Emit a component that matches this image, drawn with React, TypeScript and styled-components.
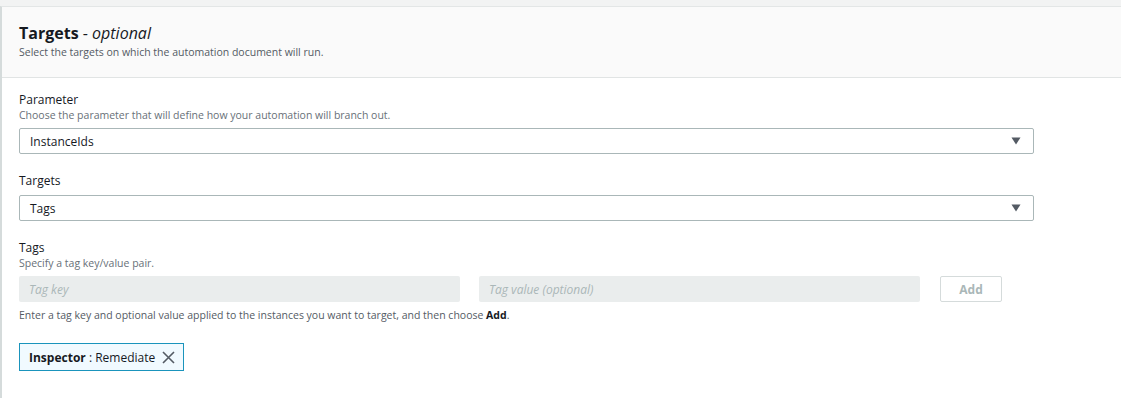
import React from 'react';
import styled, { createGlobalStyle } from 'styled-components';

const GlobalStyle = createGlobalStyle`
	html, body {
		margin: 0;
		padding: 0;
		background: #ffffff;
	}
	body {
		font-family: 'Open Sans', 'Noto Sans', Arial, sans-serif;
		color: #16191f;
	}
`;

type FieldProps = {
	label: string;
	description?: string;
	children: React.ReactNode;
};

function Field({ label, description, children }: FieldProps) {
	return (
		<View.Field>
			<Text.Label>{label}</Text.Label>
			{description && <Text.Description>{description}</Text.Description>}
			<View.Control>{children}</View.Control>
		</View.Field>
	);
}

function Select({ value }: { value: string }) {
	return (
		<View.Select>
			<Text.Value>{value}</Text.Value>
			<svg width="10" height="8" viewBox="0 0 10 8">
				<path d="M0.5 0.5 L9.5 0.5 L5 7.5 Z" fill="#545b64" />
			</svg>
		</View.Select>
	);
}

function App() {
	return (
		<>
			<GlobalStyle />
			<View.Page>
				<View.Panel>
					<View.Header>
						<Text.Title>
							Targets <span>- </span>
							<em>optional</em>
						</Text.Title>
						<Text.Subtitle>
							Select the targets on which the automation document will run.
						</Text.Subtitle>
					</View.Header>
					<View.Body>
						<Field
							label="Parameter"
							description="Choose the parameter that will define how your automation will branch out."
						>
							<Select value="InstanceIds" />
						</Field>
						<Field label="Targets">
							<Select value="Tags" />
						</Field>
						<Field label="Tags" description="Specify a tag key/value pair.">
							<View.TagRow>
								<View.Input>Tag key</View.Input>
								<View.Input>Tag value (optional)</View.Input>
								<View.Button>Add</View.Button>
							</View.TagRow>
							<Text.Hint>
								Enter a tag key and optional value applied to the instances you
								want to target, and then choose <b>Add</b>.
							</Text.Hint>
						</Field>
						<View.Token>
							<span>
								<b>Inspector</b> : Remediate
							</span>
							<svg width="13" height="13" viewBox="0 0 13 13">
								<path
									d="M1 1 L12 12 M12 1 L1 12"
									stroke="#545b64"
									strokeWidth="1.6"
								/>
							</svg>
						</View.Token>
					</View.Body>
				</View.Panel>
			</View.Page>
		</>
	);
}

export default App;

const View = {
	Page: styled.div`
		width: 1121px;
		height: 398px;
		background: #f2f3f3;
		padding-top: 6px;
		box-sizing: border-box;
		overflow: hidden;
	`,
	Panel: styled.div`
		background: #ffffff;
		border-top: 1px solid #e3e6e6;
		border-left: 2px solid #d5dbdb;
		height: 100%;
		box-sizing: border-box;
	`,
	Header: styled.div`
		background: #fafafa;
		border-bottom: 1px solid #e1e4e4;
		padding: 16px 17px 0;
		height: 71px;
		box-sizing: border-box;
	`,
	Body: styled.div`
		padding: 14px 17px 0;
		display: flex;
		flex-direction: column;
	`,
	Field: styled.div`
		display: flex;
		flex-direction: column;
		margin-bottom: 19px;
	`,
	Control: styled.div`
		margin-top: 6px;
	`,
	Select: styled.div`
		width: 1015px;
		height: 26px;
		box-sizing: border-box;
		border: 1px solid #aab7b8;
		border-radius: 2px;
		display: flex;
		align-items: center;
		justify-content: space-between;
		padding: 0 12px 0 10px;
		background: #ffffff;
	`,
	TagRow: styled.div`
		display: flex;
		align-items: center;
		gap: 19px;
	`,
	Input: styled.div`
		width: 441px;
		height: 26px;
		box-sizing: border-box;
		background: #eaeded;
		border-radius: 2px;
		display: flex;
		align-items: center;
		padding-left: 10px;
		font-size: 12px;
		font-style: italic;
		color: #aab7b8;
	`,
	Button: styled.div`
		width: 62px;
		height: 26px;
		box-sizing: border-box;
		border: 1px solid #d5dbdb;
		border-radius: 2px;
		margin-left: 1px;
		display: flex;
		align-items: center;
		justify-content: center;
		font-size: 12px;
		font-weight: 700;
		color: #aab7b8;
	`,
	Token: styled.div`
		align-self: flex-start;
		margin-top: 2px;
		height: 28px;
		box-sizing: border-box;
		border: 1px solid #1a94bc;
		background: #f1faff;
		display: flex;
		align-items: center;
		gap: 7px;
		padding: 0 8px 0 9px;
		font-size: 12px;
		color: #16191f;
		b {
			font-weight: 700;
		}
	`,
};

const Text = {
	Title: styled.div`
		font-size: 16px;
		font-weight: 700;
		line-height: 20px;
		color: #16191f;
		span {
			font-weight: 400;
		}
		em {
			font-weight: 400;
			font-style: italic;
		}
	`,
	Subtitle: styled.div`
		margin-top: 2px;
		font-size: 10.5px;
		line-height: 14px;
		color: #545b64;
	`,
	Description: styled.div`
		font-size: 10.5px;
		line-height: 14px;
		color: #687078;
	`,
	Label: styled.div`
		font-size: 12px;
		line-height: 16px;
		color: #16191f;
	`,
	Value: styled.span`
		font-size: 12px;
		color: #16191f;
	`,
	Hint: styled.div`
		margin-top: 6px;
		font-size: 10.5px;
		line-height: 14px;
		color: #545b64;
		b {
			color: #16191f;
		}
	`,
};
